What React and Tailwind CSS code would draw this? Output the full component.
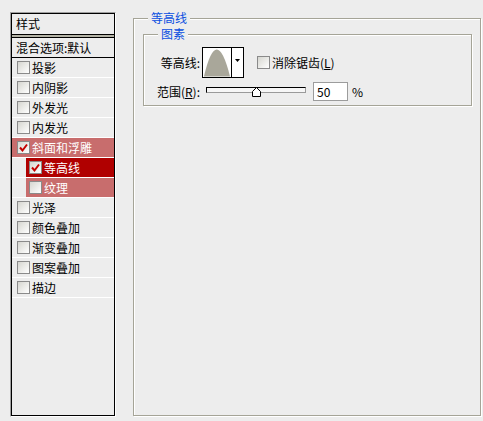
import React from "react";

const FONT = { fontFamily: '"Noto Sans CJK SC", "Liberation Sans", sans-serif' };

const Check = ({ checked }) => (
  <span className="w-[13px] h-[13px] shrink-0 border border-[#8a8a8a] bg-gradient-to-br from-[#d6d6d0] to-white flex items-center justify-center">
    {checked && (
      <svg width="11" height="11" viewBox="0 0 11 11">
        <path d="M2 5.5 L4.5 8.5 L9 2.5" fill="none" stroke="#c40000" strokeWidth="2" />
      </svg>
    )}
  </span>
);

const items = [
  { label: "投影" },
  { label: "内阴影" },
  { label: "外发光" },
  { label: "内发光" },
  { label: "斜面和浮雕", checked: true, tone: "light" },
  { label: "等高线", checked: true, tone: "dark", sub: true },
  { label: "纹理", tone: "light", sub: true },
  { label: "光泽" },
  { label: "颜色叠加" },
  { label: "渐变叠加" },
  { label: "图案叠加" },
  { label: "描边" },
];

const StyleRow = ({ item }) => {
  const bg =
    item.tone === "dark"
      ? "bg-[#b00000] text-white"
      : item.tone === "light"
      ? "bg-[#c86d6d] text-white"
      : "text-black";
  return (
    <div className={`h-[20px] border-b border-white flex ${item.sub ? "pl-[14px]" : ""}`}>
      <div className={`flex-1 flex items-center gap-[2px] ${item.sub ? "pl-[3px]" : "pl-[5px]"} ${bg}`}>
        <Check checked={item.checked} />
        <span className="leading-none">{item.label}</span>
      </div>
    </div>
  );
};

const Group = ({ title, className, children }) => (
  <div
    className={`relative border border-[#a5a497] shadow-[inset_1px_1px_0_#ffffff,1px_1px_0_#ffffff] ${className}`}
  >
    <span className="absolute top-[-8px] left-[14px] px-[3px] bg-[#ededed] text-[#0a4fe0] leading-[14px]">
      {title}
    </span>
    {children}
  </div>
);

export default function App() {
  return (
    <div
      className="w-[483px] h-[421px] bg-[#ededed] flex items-start pt-[12px] pl-[10px] text-[12px] text-black overflow-hidden"
      style={FONT}
    >
      {/* styles list */}
      <div className="w-[106px] h-[405px] border-t border-l border-[#a0a0a0] border-r border-b border-r-white border-b-white">
        <div className="h-full border border-black flex flex-col">
          <div className="h-[20px] pl-[4px] flex items-center leading-none">样式</div>
          <div className="h-[4px] border-y border-black bg-[#b4b3a6]" />
          <div className="h-[20px] pl-[4px] flex items-center border-b border-black leading-none">
            混合选项:默认
          </div>
          {items.map((it) => (
            <StyleRow key={it.label} item={it} />
          ))}
        </div>
      </div>

      {/* options */}
      <Group title="等高线" className="ml-[17px] mt-[6px] w-[348px] h-[398px]">
        <Group title="图素" className="ml-[9px] mt-[15px] w-[329px] h-[72px]">
          <div className="pt-[12px] flex flex-col gap-[4px]">
            <div className="flex items-center h-[31px]">
              <span className="w-[56px] text-right leading-none">等高线:</span>
              <div className="ml-[2px] w-[42px] h-[31px] border border-black bg-white flex">
                <div className="w-[29px] h-full border-r border-black flex items-end">
                  <svg width="29" height="29" viewBox="0 0 29 29">
                    <path d="M1 29 Q14 -27 28 29 Z" fill="#a9a79a" />
                  </svg>
                </div>
                <div className="flex-1 flex justify-center pt-[11px]">
                  <svg width="5" height="3" viewBox="0 0 5 3">
                    <path d="M0 0 H5 L2.5 3 Z" fill="#000" />
                  </svg>
                </div>
              </div>
              <div className="ml-[13px] flex items-center gap-[2px]">
                <Check />
                <span className="leading-none">
                  消除锯齿(<span className="underline">L</span>)
                </span>
              </div>
            </div>
            <div className="flex items-center h-[19px]">
              <span className="w-[56px] text-right leading-none">
                范围(<span className="underline">R</span>):
              </span>
              <div className="ml-[6px] relative w-[100px] h-[12px] flex items-start">
                <div className="w-full h-[6px] mt-[1px] border-t border-l border-black border-b border-r border-b-[#9a9a9a] border-r-[#9a9a9a] bg-[#f6f6f6]" />
                <svg className="absolute left-[46px] top-[1px]" width="10" height="11" viewBox="0 0 10 11">
                  <path d="M0.5 4.5 L4.5 0.5 L8.5 4.5 V9.5 H0.5 Z" fill="#fff" stroke="#000" />
                </svg>
              </div>
              <div className="ml-[7px] w-[35px] h-[19px] border border-[#9c9c9c] bg-white flex items-center pl-[3px] leading-none">
                50
              </div>
              <span className="ml-[4px] leading-none">%</span>
            </div>
          </div>
        </Group>
      </Group>
    </div>
  );
}
